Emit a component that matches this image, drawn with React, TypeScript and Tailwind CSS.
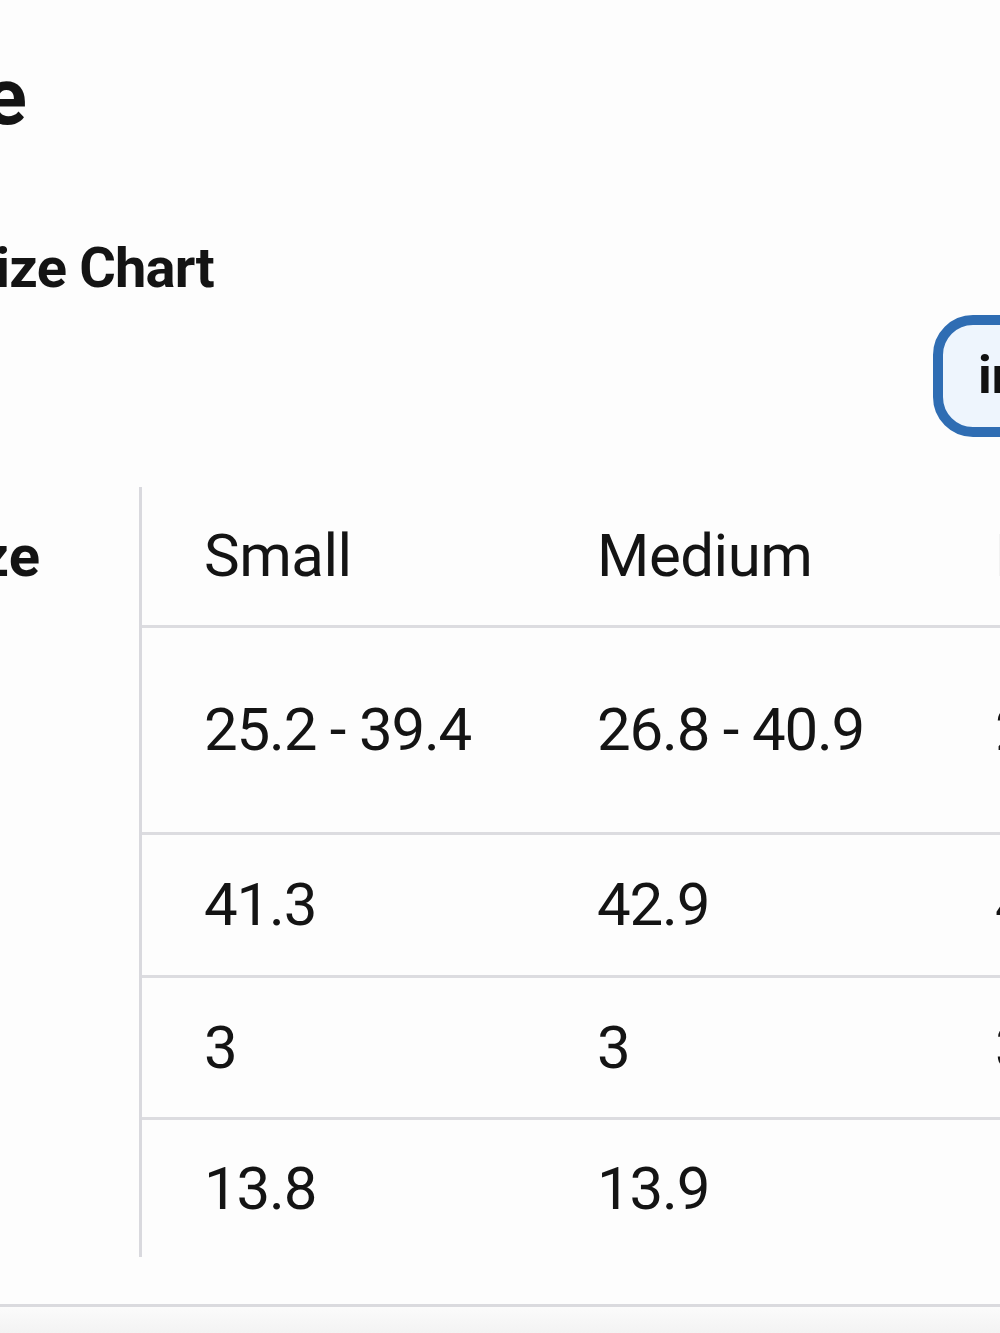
import React from "react"

type Row = { h: string; values: string[] }

const sizes = ["Small", "Medium", "Large"]
const colW = ["w-[393px]", "w-[398px]", "w-[393px]"]

const rows: Row[] = [
  { h: "h-[207px]", values: ["25.2 - 39.4", "26.8 - 40.9", "28.3 - 42.5"] },
  { h: "h-[143px]", values: ["41.3", "42.9", "44.5"] },
  { h: "h-[142px]", values: ["3", "3", "3"] },
  { h: "h-[137px]", values: ["13.8", "13.9", "14.0"] },
]

export default function App() {
  return (
    <div
      className="w-[1000px] h-[1333px] overflow-hidden bg-[#fdfdfd] text-[#141414] flex flex-col"
      style={{ fontFamily: "Roboto, 'Noto Sans', sans-serif" }}
    >
      {/* page title, cut at the left edge */}
      <div className="mt-[57px] w-[26px] h-[80px] flex justify-end overflow-hidden whitespace-nowrap">
        <h1 className="text-[80px] leading-[80px] font-bold tracking-[-1px]">Size Guide</h1>
      </div>

      <div className="mt-[103px] w-[214px] h-[56px] flex justify-end overflow-hidden whitespace-nowrap">
        <h2 className="text-[56px] leading-[56px] font-bold tracking-[-0.8px]">Size Chart</h2>
      </div>

      {/* unit toggle */}
      <div className="mt-[19px] flex">
        <div className="ml-[933px] shrink-0 h-[122px] w-[260px] rounded-[40px] border-[10px] border-[#2f6db3] bg-[#eef5fd] flex items-center pl-[35px]">
          <span className="text-[52px] leading-none font-bold text-[#111]">inches</span>
        </div>
      </div>

      {/* table */}
      <div className="mt-[50px] flex">
        <div className="w-[142px] shrink-0 border-r-[3px] border-[#d9d9de] h-[770px]">
          <div className="h-[138px] flex items-center justify-end pr-[99px] overflow-hidden whitespace-nowrap">
            <span className="text-[58px] leading-none font-bold">Size</span>
          </div>
        </div>
        <div className="flex flex-col shrink-0">
          <div className="h-[141px] flex border-b-[3px] border-[#dcdce0]">
            {sizes.map((s, j) => (
              <div key={s} className={`${colW[j]} shrink-0 pl-[62px] flex items-center`}>
                <span className="text-[60px] leading-none tracking-[-0.5px] whitespace-nowrap">{s}</span>
              </div>
            ))}
          </div>
          {rows.map((r, i) => (
            <div
              key={i}
              className={`${r.h} flex ${i < rows.length - 1 ? "border-b-[3px] border-[#dcdce0]" : ""}`}
            >
              {r.values.map((v, j) => (
                <div key={j} className={`${colW[j]} shrink-0 pl-[62px] flex items-center`}>
                  <span className="text-[60px] leading-none tracking-[-1.2px] whitespace-nowrap">{v}</span>
                </div>
              ))}
            </div>
          ))}
        </div>
      </div>

      {/* footer edge */}
      <div className="mt-[47px] flex-1 border-t-[3px] border-[#dadade] bg-gradient-to-b from-[#fbfbfb] to-[#f3f3f3]" />
    </div>
  )
}
